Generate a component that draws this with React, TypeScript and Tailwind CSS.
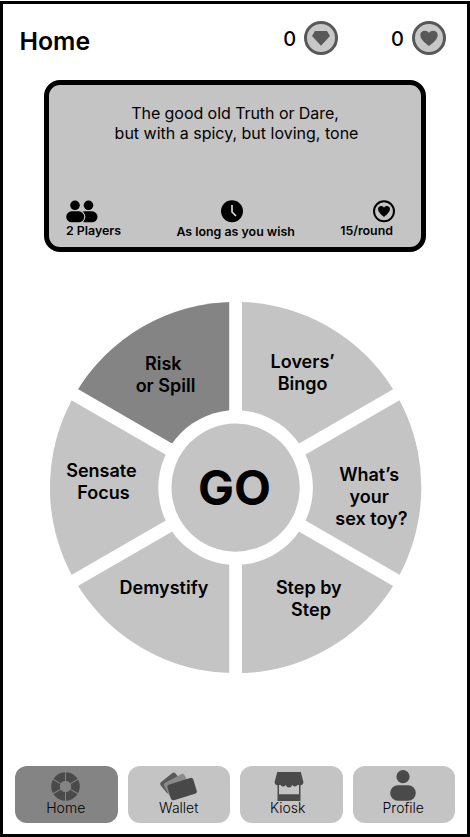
import type { ReactNode } from 'react';

const HEART = 'M12 21.5C9 19 1.5 13.5 1.5 7.6C1.5 4.4 4 2.2 6.9 2.2C9 2.2 11 3.3 12 5.2C13 3.3 15 2.2 17.1 2.2C20 2.2 22.5 4.4 22.5 7.6C22.5 13.5 15 19 12 21.5Z';

function Balance({ children }: { children: ReactNode }) {
  return (
    <div className="flex items-center gap-2">
      <span className="pt-[2px] text-xl leading-6 font-medium">0</span>
      <span className="flex size-[34px] items-center justify-center rounded-full border-[3px] border-[#585858] bg-[#c8c8c8] text-[#585858]">
        {children}
      </span>
    </div>
  );
}

const CX = 185.6;
const SPOKES = [0, 60, 120];

/* Each label line: text, centre x, baseline y. */
const LABELS: [string, number, number][] = [
  ['Risk', 113.3, 68.3],
  ['or Spill', 115.5, 90.3],
  ['Lovers’', 252.6, 66.3],
  ['Bingo', 252.6, 88.3],
  ['Sensate', 51.4, 175.3],
  ['Focus', 53.5, 197.3],
  ['What’s', 319.2, 179.3],
  ['your', 319.2, 201.3],
  ['sex toy?', 321.4, 223.3],
  ['Demystify', 113.9, 292.3],
  ['Step by', 258.8, 292.3],
  ['Step', 261, 314.3],
];

function Wheel() {
  return (
    <svg className="block h-[372px] w-[372px]" viewBox="0 0 372 372">
      <circle cx={CX} cy="185.6" r="185.7" fill="#c4c4c4" />
      <path d="M185.6 185.6L24.8 92.8A185.7 185.7 0 0 1 185.6 0Z" fill="#848484" />
      {SPOKES.map((angle) => (
        <rect key={angle} x={CX - 6.4} y="-4" width="12.8" height="380" fill="#fff" transform={`rotate(${angle} 185.6 185.6)`} />
      ))}
      <circle cx={CX} cy="185.6" r="77.3" fill="#fff" />
      <circle cx={CX} cy="185.6" r="64.1" fill="#c4c4c4" />
      <text x="184.5" y="203" textAnchor="middle" className="text-5xl font-bold">GO</text>
      {LABELS.map(([text, x, y]) => (
        <text key={`${text}${x}`} x={x} y={y} textAnchor="middle" className="text-lg font-semibold">{text}</text>
      ))}
    </svg>
  );
}

function WheelIcon() {
  return (
    <svg className="size-[29px]" viewBox="0 0 29 29">
      <circle cx="14.5" cy="14.5" r="10" fill="none" stroke="#4a4a4a" strokeWidth="8.6" />
      {SPOKES.map((angle) => (
        <path key={angle} d="M14.5 0V8.8M14.5 20.2V29" stroke="#858585" transform={`rotate(${angle} 14.5 14.5)`} />
      ))}
    </svg>
  );
}

function CardsIcon() {
  return (
    <svg className="mr-px h-[29px] w-[37px]" viewBox="0 0 37 29">
      <rect x="1.5" y="4" width="19" height="14" rx="2.5" fill="#5a5a5a" transform="rotate(-39 11 11)" />
      <rect x="5.5" y="5.5" width="23" height="16" rx="2.5" fill="#8a8a8a" transform="rotate(-28 17 13.5)" />
      <rect x="8.6" y="8.9" width="27" height="16.4" rx="2.5" fill="#484848" transform="rotate(-17 22.1 17.1)" />
    </svg>
  );
}

function KioskIcon() {
  return (
    <svg className="ml-[2px] h-[29px] w-[30px]" viewBox="0 0 30 29" fill="#4a4a4a">
      <path d="M3.2 0H26.8L29.5 10.5A3.2 3.2 0 0 1 23.8 12A3 3 0 0 1 18 12.5A3 3 0 0 1 12 12.5A3 3 0 0 1 6.2 12A3.2 3.2 0 0 1 .5 10.5Z" />
      <path fillRule="evenodd" d="M3.5 12H26.5V29H3.5ZM5 13V22.3H25V13Z" />
    </svg>
  );
}

function PersonIcon() {
  return (
    <svg className="h-[31px] w-[26px]" viewBox="0 0 26 31" fill="#4a4a4a">
      <circle cx="13" cy="6.7" r="6.6" />
      <rect x=".2" y="15.2" width="25.6" height="15.5" rx="7.75" />
    </svg>
  );
}

function NavItem({ label, active, className = '', children }: { label: string; active?: boolean; className?: string; children: ReactNode }) {
  return (
    <button className={`flex h-[57px] min-w-0 flex-col items-center rounded-[12px] ${active ? 'bg-[#848484]' : 'bg-[#c4c4c4]'} ${className}`}>
      <span className="flex h-[35px] items-end">{children}</span>
      <span className="text-sm leading-[14px] font-light">{label}</span>
    </button>
  );
}

export default function App() {
  return (
    <div className="h-[837px] w-[470px] bg-white pt-px font-['Inter',sans-serif] text-black">
      <div className="flex h-[836px] flex-col border-[3px] border-black">
        <header className="flex h-[76px] justify-between pt-[17px] pr-[21px] pl-[16.5px]">
          <h1 className="pt-1 text-[24.8px] leading-8 font-semibold">Home</h1>
          <div className="flex h-[34px] gap-[53px]">
            <Balance>
              <svg className="h-[15px] w-[18px]" viewBox="0 0 18 15" fill="currentColor">
                <path d="M3 0H15L18 5L9 14.7L0 5Z" />
              </svg>
            </Balance>
            <Balance>
              <svg className="h-[19px] w-5" viewBox="0 0 24 24" preserveAspectRatio="none" fill="currentColor">
                <path d={HEART} />
              </svg>
            </Balance>
          </div>
        </header>

        <section className="mx-auto flex h-[172px] w-[382px] flex-col justify-between rounded-[16px] border-[5px] border-black bg-[#c4c4c4] pt-[18px] pr-[27px] pb-2 pl-[17px]">
          <p className="pl-[13px] text-center text-base leading-5">
            <span className="mr-[3px] tracking-[-0.06px]">The good old Truth or Dare,</span>
            <br />
            but with a spicy, but loving, tone
          </p>
          <div className="flex justify-between text-[12.4px] leading-[15px] font-semibold">
            <div className="flex flex-col items-start">
              <svg className="h-[23px] w-8" viewBox="0 0 32 23">
                <circle cx="22.5" cy="5.3" r="4.8" />
                <rect x="13" y="11.3" width="18.5" height="11" rx="5.5" />
                <rect x="-.8" y="10.3" width="20.2" height="13" rx="6.5" fill="#c4c4c4" />
                <circle cx="9" cy="5.3" r="4.8" />
                <rect x=".2" y="11.3" width="18" height="11" rx="5.5" />
              </svg>
              <span>2 Players</span>
            </div>
            <div className="flex flex-col items-center pl-[10px]">
              <svg className="mr-[7px] h-[23px] w-[22px]" viewBox="0 0 22 23">
                <circle cx="11" cy="11.3" r="11" />
                <path d="M11 5V12L15 16" fill="none" stroke="#e4e4e4" strokeWidth="1.6" />
              </svg>
              <span className="pt-px">As long as you wish</span>
            </div>
            <div className="flex flex-col items-end">
              <svg className="-mr-px h-[23px] w-[22px]" viewBox="0 0 22 23">
                <circle cx="11" cy="11.3" r="10" fill="none" stroke="#000" strokeWidth="2" />
                <path d={HEART} transform="translate(4.2 4.8) scale(.567)" />
              </svg>
              <span className="mr-px">15/round</span>
            </div>
          </div>
        </section>

        <main className="flex flex-1 justify-center pt-[50px] pl-[2px]">
          <Wheel />
        </main>

        <nav className="mb-[11px] grid grid-cols-4 gap-[10px] px-3">
          <NavItem label="Home" active className="pr-px"><WheelIcon /></NavItem>
          <NavItem label="Wallet"><CardsIcon /></NavItem>
          <NavItem label="Kiosk" className="pr-[7px]"><KioskIcon /></NavItem>
          <NavItem label="Profile" className="pr-px"><PersonIcon /></NavItem>
        </nav>
      </div>
    </div>
  );
}
